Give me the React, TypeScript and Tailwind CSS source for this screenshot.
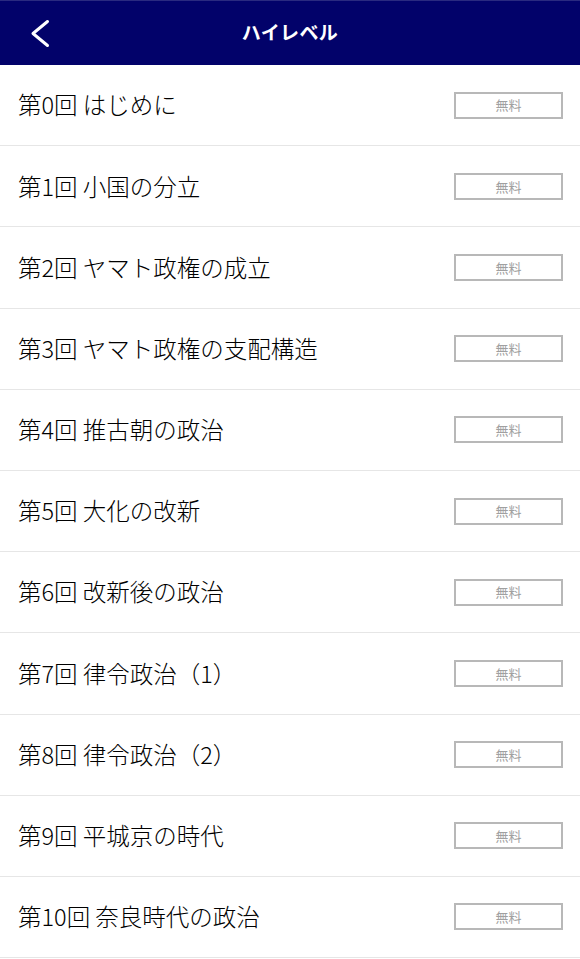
import React from "react";

const items = [
  "第0回 はじめに",
  "第1回 小国の分立",
  "第2回 ヤマト政権の成立",
  "第3回 ヤマト政権の支配構造",
  "第4回 推古朝の政治",
  "第5回 大化の改新",
  "第6回 改新後の政治",
  "第7回 律令政治（1）",
  "第8回 律令政治（2）",
  "第9回 平城京の時代",
  "第10回 奈良時代の政治",
];

export default function App() {
  return (
    <div
      className="w-[580px] min-h-[959px] bg-white"
      style={{ fontFamily: '"Noto Sans CJK JP", "Noto Sans", sans-serif' }}
    >
      <header className="relative h-[65px] bg-[#02026a] border-t border-[#2a2a80] flex items-center justify-center">
        <button className="absolute left-[28px] top-[17px] text-white">
          <svg width="24" height="30" viewBox="0 0 24 30" fill="none">
            <path d="M19.5 3.5 L5 15.5 L19.5 27.5" stroke="white" strokeWidth="3" strokeLinecap="round" strokeLinejoin="round" />
          </svg>
        </button>
        <h1 className="text-white font-bold text-[19px] tracking-[0.02em] -mt-[1px]">ハイレベル</h1>
      </header>
      <ul>
        {items.map((t) => (
          <li
            key={t}
            className="h-[81.2px] border-b border-[#e6e6e6] flex items-center justify-between pl-[18px] pr-[17px]"
          >
            <span className="text-[23.5px] font-light text-black leading-none">{t}</span>
            <span className="w-[109px] h-[27px] border-2 border-[#b8b8b8] flex items-center justify-center text-[13px] text-[#a0a0a0]">
              無料
            </span>
          </li>
        ))}
      </ul>
    </div>
  );
}
